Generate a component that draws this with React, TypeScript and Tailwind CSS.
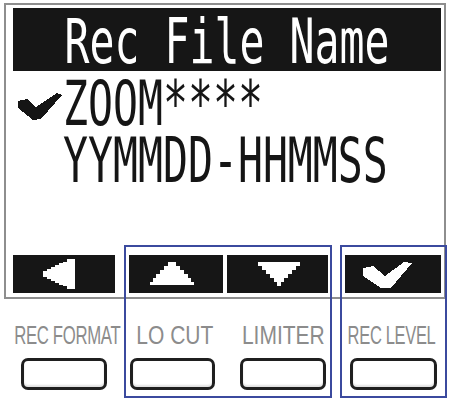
import React from "react";

const upRows: [number, number, number][] = [
  [262, 266, 4],
  [266, 270, 8],
  [270, 274, 12],
  [274, 278, 16],
  [278, 282, 19],
  [282, 285, 22],
];
const downRows: [number, number, number][] = [
  [262, 266, 21],
  [266, 270, 17],
  [270, 274, 13],
  [274, 278, 9],
  [278, 282, 5],
  [282, 286, 2],
];
const leftCols: [number, number, number][] = [
  [43, 47, 3],
  [47, 51, 5],
  [51, 55, 7],
  [55, 59, 9],
  [59, 63, 11],
  [63, 67, 12],
];

function Tab({ x, w, children, cls }: { x: number; w: number; children: React.ReactNode; cls: string }) {
  return (
    <div className={`${cls} h-[38px] bg-[#161616] shrink-0`}>
      <svg width={w} height={38} viewBox={`${x} 255 ${w} 38`} shapeRendering="crispEdges" className="block">
        {children}
      </svg>
    </div>
  );
}

export default function App() {
  const lcd = "font-['DejaVu_Sans_Mono',monospace] text-[41.5px] leading-[38px] whitespace-nowrap inline-block shrink-0 scale-y-[1.5]";
  const label = "inline-block shrink-0 whitespace-nowrap text-[25px] leading-[25px] font-['Liberation_Sans',Arial,sans-serif] text-[#8c8c8c]";
  const btn = "h-[32px] border-[3px] border-[#1f1f1f] rounded-[7px] bg-white shrink-0 shadow-[inset_0_-2px_2px_rgba(0,0,0,0.12)]";
  return (
    <div className="relative w-[451px] h-[403px] bg-white overflow-hidden">
      {/* LCD frame */}
      <div className="ml-[4px] mt-[3px] w-[442px] h-[296px] border-2 border-[#8e8e8e] flex flex-col">
        <div className="mt-[3px] ml-[7px] w-[428px] h-[63px] bg-[#161616] flex justify-center items-start shrink-0">
          <span className={`${lcd} text-white mt-[15px]`}>Rec File Name</span>
        </div>
        <div className="mt-[4px] h-[57px] flex items-start shrink-0">
          <svg width={46} height={28} viewBox="17 93 46 28" className="ml-[11px] mt-[18px] shrink-0" shapeRendering="crispEdges">
            <polygon points="18,101 27,99 36,107 57,93 62,95 41,119 33,120 18,108" fill="#151515" />
          </svg>
          <span className={`${lcd} text-[#151515] mt-[10px]`}>ZOOM****</span>
        </div>
        <div className="h-[57px] pl-[57px] flex items-start shrink-0">
          <span className={`${lcd} text-[#151515] mt-[10px]`}>YYMMDD-HHMMSS</span>
        </div>
        <div className="mt-auto mb-[4px] ml-[7px] flex">
          <Tab x={13} w={102} cls="w-[102px]">
            {leftCols.map(([a, b, h]) => (
              <rect key={a} x={a} y={274 - h} width={b - a} height={h * 2} fill="#fff" />
            ))}
            <rect x={67} y={259} width={8} height={30} fill="#fff" />
          </Tab>
          <Tab x={129} w={94} cls="ml-[14px] w-[94px]">
            {upRows.map(([a, b, h]) => (
              <rect key={a} x={172 - h} y={a} width={h * 2} height={b - a} fill="#fff" />
            ))}
          </Tab>
          <Tab x={227} w={101} cls="ml-[4px] w-[101px]">
            {downRows.map(([a, b, h]) => (
              <rect key={a} x={279 - h} y={a} width={h * 2} height={b - a} fill="#fff" />
            ))}
          </Tab>
          <Tab x={345} w={96} cls="ml-[17px] w-[96px]">
            <polygon points="363,268 373,266 385,276 404,262 412,263 391,288 381,288 363,276" fill="#fff" />
          </Tab>
        </div>
      </div>

      {/* labels */}
      <div className="mt-[24px] flex h-[25px]">
        <div className="w-[135px] flex justify-center shrink-0">
          <span className={`${label} scale-x-[0.67] tracking-[-0.5px]`}>REC FORMAT</span>
        </div>
        <div className="w-[79px] flex justify-center shrink-0">
          <span className={`${label} scale-x-[0.84]`}>LO CUT</span>
        </div>
        <div className="w-[139px] flex justify-center shrink-0">
          <span className={`${label} scale-x-[0.84]`}>LIMITER</span>
        </div>
        <div className="w-[78px] flex justify-center shrink-0">
          <span className={`${label} scale-x-[0.66] tracking-[-0.5px]`}>REC LEVEL</span>
        </div>
      </div>

      {/* buttons */}
      <div className="mt-[10px] flex">
        <div className={`${btn} ml-[21px] w-[86px]`} />
        <div className={`${btn} ml-[23px] w-[85px]`} />
        <div className={`${btn} ml-[25px] w-[86px]`} />
        <div className={`${btn} ml-[24px] w-[87px]`} />
      </div>

      {/* highlight boxes */}
      <div className="absolute left-[124px] top-[245px] w-[208px] h-[153px] border-2 border-[#3b4a9e]" />
      <div className="absolute left-[340px] top-[245px] w-[107px] h-[153px] border-2 border-[#3b4a9e]" />
    </div>
  );
}
